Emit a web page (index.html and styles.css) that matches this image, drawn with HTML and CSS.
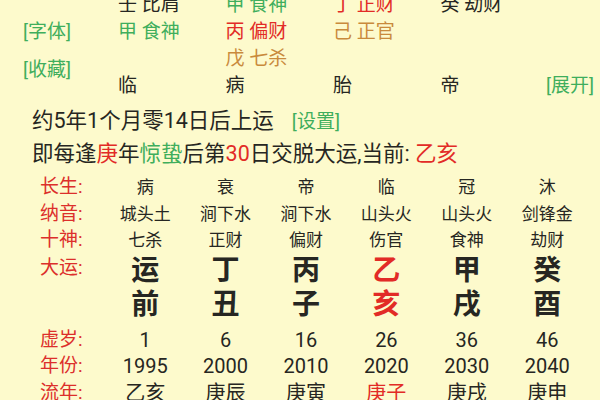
FILE: index.html
```html
<!DOCTYPE html>
<html lang="zh">
<head>
<meta charset="utf-8">
<link rel="stylesheet" href="styles.css">
</head>
<body>
<div class="page">
  <div class="pillars">
    <div class="side">
      <span class="link">[字体]</span>
      <span class="link fav">[收藏]</span>
    </div>
    <div class="cell r1 c2 dark">壬 比肩</div>
    <div class="cell r1 c3 green">甲 食神</div>
    <div class="cell r1 c4 red">丁 正财</div>
    <div class="cell r1 c5 dark">癸 劫财</div>
    <div class="cell r2 c2 green">甲 食神</div>
    <div class="cell r2 c3 red">丙 偏财</div>
    <div class="cell r2 c4 brown">己 正官</div>
    <div class="cell r3 c3 brown">戊 七杀</div>
    <div class="cell r4 c2 dark">临</div>
    <div class="cell r4 c3 dark">病</div>
    <div class="cell r4 c4 dark">胎</div>
    <div class="cell r4 c5 dark">帝</div>
    <div class="cell r4 c6 link expand">[展开]</div>
  </div>

  <p class="line first">约5年1个月零14日后上运<span class="link setup">[设置]</span></p>
  <p class="line">即每逢<span class="red">庚</span>年<span class="green">惊蛰</span>后第<span class="red">30</span>日交脱大运,当前: <span class="red">乙亥</span></p>

  <div class="table">
    <div class="lbl">长生:</div>
    <div class="td">病</div><div class="td">衰</div><div class="td">帝</div><div class="td">临</div><div class="td">冠</div><div class="td">沐</div>

    <div class="lbl">纳音:</div>
    <div class="td">城头土</div><div class="td">涧下水</div><div class="td">涧下水</div><div class="td">山头火</div><div class="td">山头火</div><div class="td">剑锋金</div>

    <div class="lbl">十神:</div>
    <div class="td">七杀</div><div class="td">正财</div><div class="td">偏财</div><div class="td">伤官</div><div class="td">食神</div><div class="td">劫财</div>

    <div class="lbl big-lbl">大运:</div>
    <div class="td big">运</div><div class="td big">丁</div><div class="td big">丙</div><div class="td big red">乙</div><div class="td big">甲</div><div class="td big">癸</div>

    <div class="lbl"></div>
    <div class="td big">前</div><div class="td big">丑</div><div class="td big">子</div><div class="td big red">亥</div><div class="td big">戌</div><div class="td big">酉</div>

    <div class="lbl low">虚岁:</div>
    <div class="td num low">1</div><div class="td num low">6</div><div class="td num low">16</div><div class="td num low">26</div><div class="td num low">36</div><div class="td num low">46</div>

    <div class="lbl">年份:</div>
    <div class="td num">1995</div><div class="td num">2000</div><div class="td num">2010</div><div class="td num">2020</div><div class="td num">2030</div><div class="td num">2040</div>

    <div class="lbl">流年:</div>
    <div class="td num">乙亥</div><div class="td num">庚辰</div><div class="td num">庚寅</div><div class="td num red">庚子</div><div class="td num">庚戌</div><div class="td num">庚申</div>
  </div>
</div>
</body>
</html>
```

FILE: styles.css
```css
html, body {
  margin: 0;
  padding: 0;
  background: #fdfacc;
}
body {
  width: 600px;
  height: 400px;
  overflow: hidden;
  font-family: Roboto, "Noto Sans CJK SC", sans-serif;
  color: #262622;
}
.page {
  width: 600px;
}
.dark { color: #262622; }
.red { color: #e22b26; }
.green { color: #3fae5c; }
.brown { color: #c98a3c; }
.link { color: #3fae5c; font-size: 19px; }

.pillars {
  display: grid;
  grid-template-columns: 118px repeat(4, 107.5px) 1fr;
  grid-template-rows: repeat(4, 27px);
  margin-top: -9px;
  font-size: 19px;
  line-height: 27px;
}
.side {
  grid-column: 1;
  grid-row: 2 / span 3;
  display: flex;
  flex-direction: column;
  align-items: flex-start;
  padding-left: 23px;
}
.side .fav { margin-top: 11px; }
.cell { white-space: nowrap; }
.r1 { grid-row: 1; }
.r2 { grid-row: 2; }
.r3 { grid-row: 3; }
.r4 { grid-row: 4; }
.c2 { grid-column: 2; }
.c3 { grid-column: 3; }
.c4 { grid-column: 4; }
.c5 { grid-column: 5; }
.c6 { grid-column: 6; }
.expand { margin-left: -2px; }

.line {
  margin: 0;
  padding-left: 32px;
  font-size: 21.5px;
  line-height: 32px;
  white-space: nowrap;
}
.line.first { margin-top: 6px; }
.setup { margin-left: 18px; }

.table {
  display: grid;
  grid-template-columns: 105px repeat(6, 80.4px);
  grid-template-rows: 26.5px 26.5px 26.5px 34px 34px 31.5px 26.5px 26.5px;
  margin-top: 4px;
  align-items: center;
}
.lbl {
  padding-left: 40px;
  color: #dc2f2b;
  font-size: 19px;
  line-height: 26px;
}
.big-lbl { align-self: start; margin-top: 1px; }
.low { align-self: end; }
.td {
  text-align: center;
  font-size: 17px;
  line-height: 26px;
}
.big {
  font-size: 28px;
  font-weight: 700;
  line-height: 34px;
}
.num {
  font-size: 20px;
}
```
